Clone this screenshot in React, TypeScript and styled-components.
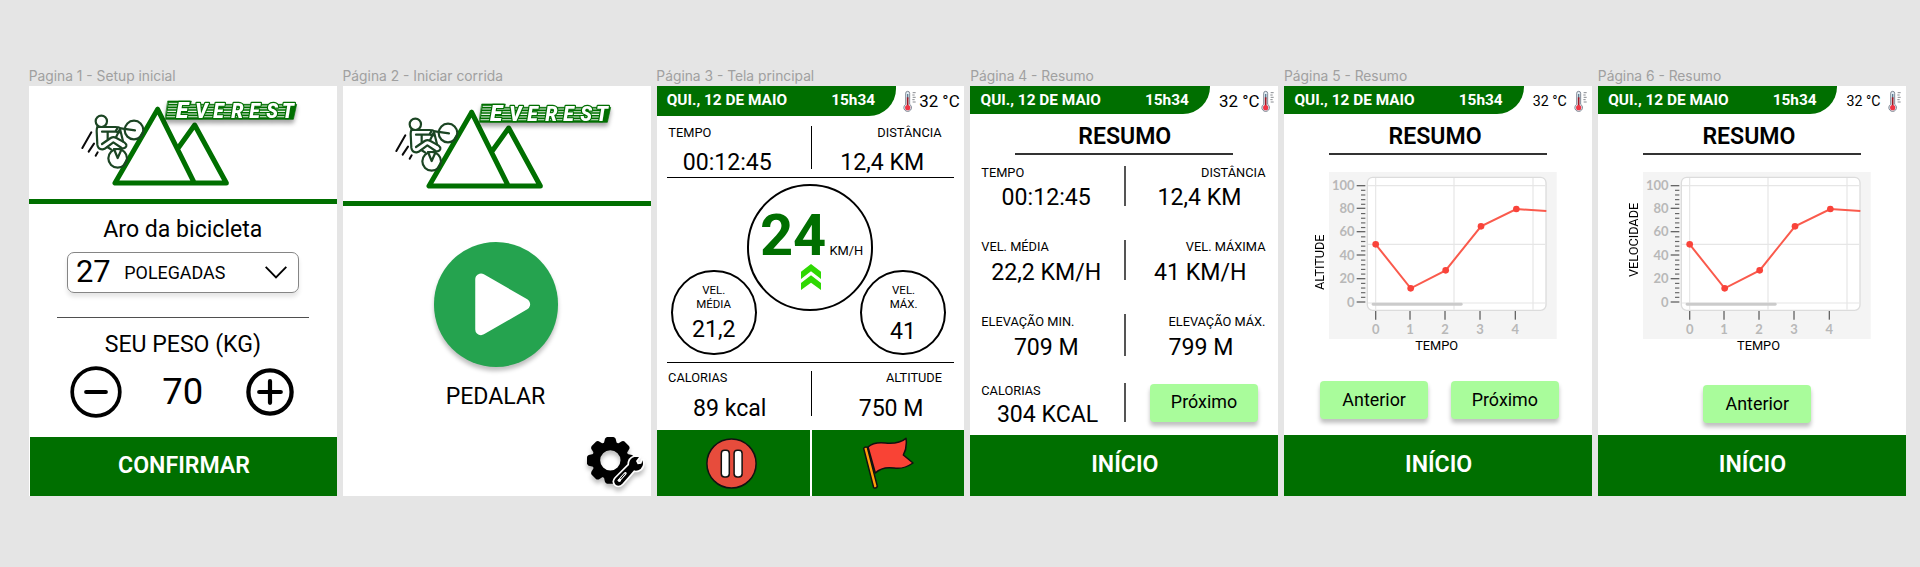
import React from "react";
import styled, { createGlobalStyle } from "styled-components";

const GREEN = "#006f00";

const GlobalStyle = createGlobalStyle`
  * { box-sizing: border-box; }
  body {
    margin: 0;
    background: #e5e5e5;
    color: #000;
    font-family: Roboto, "Liberation Sans", sans-serif;
  }
  svg { display: block; flex: none; }
`;

const Board = styled.main`
  display: flex;
  gap: 6.15px;
  height: 567px;
  padding: 66.3px 0 0 29px;
  overflow: hidden;
`;

const Page = styled.section`
  flex: none;
  width: 307.7px;
`;

const PageLabel = styled.h2`
  margin: 0 0 0 -0.3px;
  height: 20px;
  font: 400 13.8px/21.4px Inter, sans-serif;
  color: #a0a0a0;
  white-space: nowrap;
`;

const Frame = styled.div`
  display: flex;
  flex-direction: column;
  height: 410px;
  background: #fff;
  overflow: hidden;
`;

const Text = styled.div<{ $size?: number; $weight?: number; $line?: number; $top?: number; $shift?: number }>`
  flex: none;
  margin-top: ${(p) => p.$top ?? 0}px;
  padding-left: ${(p) => Math.max(p.$shift ?? 0, 0)}px;
  padding-right: ${(p) => Math.max(-(p.$shift ?? 0), 0)}px;
  font-size: ${(p) => p.$size ?? 23.08}px;
  font-weight: ${(p) => p.$weight ?? 400};
  line-height: ${(p) => p.$line ?? 28}px;
  text-align: center;
  white-space: nowrap;
`;

const LogoBar = styled.header<{ $height: number; $top: number }>`
  flex: none;
  height: ${(p) => p.$height}px;
  padding-top: ${(p) => p.$top}px;
  border-bottom: 5.5px solid ${GREEN};
  overflow: hidden;
`;

const Select = styled.div`
  flex: none;
  display: flex;
  align-items: center;
  width: 232px;
  height: 41px;
  margin: 8.3px 0 0 38px;
  padding: 0 11.5px 0 7.9px;
  border: 1px solid #858585;
  border-radius: 7px;
  box-shadow: 0 4px 4px rgba(0, 0, 0, 0.1);
`;

const SelectValue = styled.span`
  width: 48.4px;
  font-size: 30.9px;
  line-height: 38px;
`;

const SelectUnit = styled.span`
  flex: 1;
  font-size: 17.9px;
`;

const Rule = styled.hr<{ $top: number; $left: number; $width: number; $weight?: number; $color?: string }>`
  flex: none;
  width: ${(p) => p.$width}px;
  height: ${(p) => p.$weight ?? 1.3}px;
  margin: ${(p) => p.$top}px 0 0 ${(p) => p.$left}px;
  border: 0;
  background: ${(p) => p.$color ?? "#000"};
`;

const Stepper = styled.div`
  flex: none;
  display: flex;
  align-items: center;
  justify-content: space-between;
  height: 54px;
  margin-top: 5.9px;
  padding: 0 42.4px 0 40.8px;
  font-size: 36.4px;
`;

const StepperValue = styled.span`
  margin-left: -2.6px;
`;

const FooterButton = styled.button<{ $height: number; $left?: number }>`
  flex: none;
  width: auto;
  height: ${(p) => p.$height}px;
  margin: auto 0 0 ${(p) => p.$left ?? 0}px;
  padding: 0 0 1.4px 1px;
  border: 0;
  background: ${GREEN};
  color: #fff;
  font: 600 23.1px/28px Roboto, sans-serif;
`;

const PlayButton = styled.button`
  flex: none;
  width: 124.6px;
  height: 124.6px;
  margin: 36.4px 0 0 91px;
  padding: 0;
  border: 0;
  border-radius: 50%;
  background: #25a34f;
  box-shadow: 0 4px 4px rgba(0, 0, 0, 0.25);
`;

const SettingsSlot = styled.div`
  display: flex;
  justify-content: flex-end;
  margin: auto 5.4px 7.3px 0;
`;

const StatusRow = styled.header<{ $height: number }>`
  flex: none;
  display: flex;
  height: ${(p) => p.$height}px;
`;

const StatusDate = styled.div`
  display: flex;
  width: 239.3px;
  padding-left: 10.1px;
  border-bottom-right-radius: 27px;
  background: ${GREEN};
  color: #fff;
  font-weight: 700;
  font-size: 15.38px;
  line-height: 29.8px;
  white-space: nowrap;
`;

const StatusDay = styled.span`
  width: 164.4px;
`;

const StatusWeather = styled.div<{ $pad: number; $size: number; $gap: number; $reverse?: boolean }>`
  display: flex;
  flex-direction: ${(p) => (p.$reverse ? "row-reverse" : "row")};
  justify-content: ${(p) => (p.$reverse ? "flex-end" : "flex-start")};
  gap: ${(p) => p.$gap}px;
  padding-left: ${(p) => p.$pad}px;
  font-size: ${(p) => p.$size}px;
  line-height: 30.2px;
  white-space: nowrap;
`;

const Row = styled.div<{ $height: number; $top?: number; $thin?: boolean }>`
  flex: none;
  display: grid;
  grid-template-columns: ${(p) => (p.$thin ? "154.1px 1px" : "153.5px 1.6px")} 1fr;
  height: ${(p) => p.$height}px;
  margin-top: ${(p) => p.$top ?? 0}px;
`;

const Column = styled.div`
  display: flex;
  flex-direction: column;
`;

const StatLabel = styled.div<{ $left?: number; $right?: number }>`
  margin: 0 ${(p) => p.$right ?? 0}px 0 ${(p) => p.$left ?? 0}px;
  text-align: ${(p) => (p.$right ? "right" : "left")};
  font-size: 12.8px;
  line-height: 16.8px;
  white-space: nowrap;
`;

const StatValue = styled.div<{ $left: number; $gap: number }>`
  margin: ${(p) => p.$gap}px 0 0 ${(p) => p.$left + 0.4}px;
  font-size: 23.12px;
  line-height: 24px;
  white-space: nowrap;
`;

const Separator = styled.div<{ $top: number; $height: number; $color?: string }>`
  height: ${(p) => p.$height}px;
  margin-top: ${(p) => p.$top}px;
  background: ${(p) => p.$color ?? "#555"};
`;

const Gauges = styled.div`
  flex: none;
  display: flex;
  align-items: flex-start;
  height: 178.2px;
  padding: 6.2px 0 0 14.2px;
`;

const Dial = styled.div<{ $size: number; $top?: number; $left?: number }>`
  flex: none;
  display: flex;
  flex-direction: column;
  width: ${(p) => p.$size}px;
  height: ${(p) => p.$size}px;
  margin: ${(p) => p.$top ?? 0}px 0 0 ${(p) => p.$left ?? 0}px;
  border: 2px solid #000;
  border-radius: 50%;
`;

const Speed = styled.div`
  display: flex;
  align-items: baseline;
  height: 66px;
  margin-top: 15.4px;
  padding-left: 11.4px;
  color: ${GREEN};
  font-size: 57.8px;
  font-weight: 700;
  line-height: 66px;
`;

const SpeedUnit = styled.span`
  margin-left: 3.2px;
  color: #000;
  font-size: 12.9px;
  font-weight: 400;
  line-height: 16px;
`;

const SpeedArrows = styled.div`
  margin: -3.7px 0 0 52.7px;
`;

const Actions = styled.div`
  display: grid;
  grid-template-columns: 153.7px 1fr;
  gap: 1.2px;
  height: 66.8px;
  margin-top: auto;
`;

const ActionButton = styled.button<{ $left: number; $top: number }>`
  padding: ${(p) => p.$top}px 0 0 ${(p) => p.$left}px;
  display: flex;
  align-items: flex-start;
  border: 0;
  background: ${GREEN};
`;

const NavButton = styled.button`
  flex: none;
  width: 107.7px;
  height: 38.3px;
  padding: 0 0 1px;
  border: 0;
  border-radius: 4px;
  background: #a9fc9b;
  box-shadow: 0 4px 4px rgba(0, 0, 0, 0.25);
  color: #000;
  font: 400 17.9px/24px Roboto, sans-serif;
`;

const NavRow = styled.div<{ $top: number; $left: number }>`
  flex: none;
  display: flex;
  gap: 23px;
  margin: ${(p) => p.$top}px 0 0 ${(p) => p.$left}px;
`;

const ChartArea = styled.div`
  flex: none;
  display: flex;
  height: 167px;
  margin-top: 16.6px;
  padding-left: 27.5px;
`;

const AxisName = styled.div<{ $bottom: number }>`
  width: 17.5px;
  padding: ${(p) => Math.max(p.$bottom, 0)}px 0 ${(p) => Math.max(-p.$bottom, 0)}px 1.5px;
  writing-mode: vertical-rl;
  transform: rotate(180deg);
  font-size: 12.7px;
  line-height: 16px;
  white-space: nowrap;
  text-align: center;
`;

const hatch = [131, 139, 147, 155, 163, 171];
const letters = [
  { c: "E", x: 468, s: 68 },
  { c: "V", x: 526, s: 58 },
  { c: "E", x: 580, s: 58 },
  { c: "R", x: 634, s: 58 },
  { c: "E", x: 688, s: 58 },
  { c: "S", x: 739, s: 58 },
  { c: "T", x: 786, s: 58 },
];

function Logo() {
  return (
    <svg width="307.7" height="112.7" viewBox="27 79 923 338" fill="none" strokeLinecap="round" strokeLinejoin="round">
      <path d="M413 149L285 370H619L524 196L473 267M413 149L522 368" stroke={GREEN} strokeWidth="15" />
      <g stroke="#1b4523" strokeWidth="6.6">
        <circle cx="342" cy="211" r="28" />
        <circle cx="293" cy="296" r="28" />
        <circle cx="244" cy="185" r="17" />
        <path d="M232 202H285Q296 202 303 206L345 212" />
        <path d="M232 203Q230 206 230 214L232 255Q234 270 248 269Q254 268 260 263L280 248L305 265Q316 268 319 259Q320 253 313 248L288 234Q280 230 272 235L246 253" />
        <path d="M246 216H286L292 206M263 217V238M300 208L288 233M300 208L309 245M287 216L300 218" />
        <path d="M293 295L282 268H305ZM274 270L262 262" />
      </g>
      <path d="M214 218L187 265M222 252L206 276M233 278L227 288" stroke="#0a0a0a" strokeWidth="6" />
      <g style={{ filter: "drop-shadow(0px 11px 6px rgba(0,0,0,.35))" }}>
        <path d="M444 124H514L512 134H830L820 179H436Z" fill={GREEN} stroke={GREEN} strokeWidth="2" />
        {hatch.map((y) => (
          <path key={y} d={`M${446 - (y - 131) * 0.16} ${y}H${y < 134 ? 480 : 806}`} stroke="#e4f1e4" strokeWidth="3.2" strokeLinecap="butt" />
        ))}
        <g fontFamily="Roboto, sans-serif" fontWeight="900" fontStyle="italic" fill="#fff" stroke={GREEN} strokeWidth="7" paintOrder="stroke">
          {letters.map((l) => (
            <text key={l.x} x={l.x} y="176" fontSize={l.s}>
              {l.c}
            </text>
          ))}
        </g>
      </g>
    </svg>
  );
}

function Minus() {
  return (
    <svg width="52" height="52" viewBox="-26 -26 52 52" fill="none" stroke="#000" strokeLinecap="round">
      <circle r="23.8" strokeWidth="3.7" />
      <path d="M-9.9 0H9.9" strokeWidth="4" />
    </svg>
  );
}

function Plus() {
  return (
    <svg width="48" height="48" viewBox="-24 -24 48 48" fill="none" stroke="#000" strokeLinecap="round">
      <circle r="21.6" strokeWidth="4.3" />
      <path d="M-10.8 0H10.8M0 -10.8V10.8" strokeWidth="4.2" />
    </svg>
  );
}

function Thermometer() {
  return (
    <svg width="13" height="29" viewBox="0 0 39 87" fill="none">
      <path d="M8 22a6 6 0 0 1 12 0v33a11.5 11.5 0 1 1-12 0z" fill="#e3edf4" stroke="#5a6472" strokeWidth="2.2" />
      <path d="M14 24v14" stroke="#5c7c92" strokeWidth="4" />
      <path d="M14 34v26" stroke="#a01824" strokeWidth="5" />
      <circle cx="14" cy="65" r="7.8" fill="#f03545" />
      <path d="M29 20h9M28 27h7M29 34h9M28 41h7M29 48h9" stroke="#4b5058" strokeWidth="2" />
    </svg>
  );
}

function SettingsIcon() {
  return (
    <svg width="58" height="54" viewBox="0 0 174 162" style={{ filter: "drop-shadow(0px 4px 2px rgba(0,0,0,.25))" }}>
      <g transform="translate(70 76)">
        {[0, 45, 90, 135, 180, 225, 270, 315].map((a) => (
          <path key={a} transform={`rotate(${a})`} d="M-20 -48L-16 -65Q-13 -70 -9 -70H9Q13 -70 16 -65L20 -48Z" />
        ))}
        <circle r="43" fill="none" stroke="#000" strokeWidth="25" />
      </g>
      <path d="M86 130L126 90Q126 70 142 66L156 66L147 78L152 88L163 86L167 76Q172 98 154 106Q146 108 141 106L106 146Q96 156 86 149Q77 140 86 130Z" stroke="#fff" strokeWidth="10" strokeLinejoin="round" />
      <path d="M86 130L126 90Q126 70 142 66L156 66L147 78L152 88L163 86L167 76Q172 98 154 106Q146 108 141 106L106 146Q96 156 86 149Q77 140 86 130Z" />
      <path d="M99 133L115 115" stroke="#fff" strokeWidth="8" strokeLinecap="round" />
      <path d="M101 131L113 117" stroke="#000" strokeWidth="3" strokeLinecap="round" />
      <circle cx="97" cy="136" r="5" fill="#fff" />
    </svg>
  );
}

function Flag() {
  return (
    <svg width="52" height="52" viewBox="0 0 156 156" stroke="#101010" strokeWidth="4.5" strokeLinejoin="round">
      <path d="M18 30Q36 14 70 18Q110 22 132 4Q136 32 124 54L153 78Q124 98 96 93Q60 88 40 108Z" fill="#f94335" />
      <path d="M5 34Q9 28 16 31L46 148Q42 156 35 152Z" fill="#ff9d0a" />
    </svg>
  );
}

const yLabels = [
  [100, 41],
  [80, 109],
  [60, 179],
  [40, 249],
  [20, 320],
  [0, 390],
];
const xTicks = [140, 243, 348, 453, 559];
const points = [
  [140, 217],
  [245, 349],
  [350, 295],
  [456, 163],
  [562, 111],
];

function Chart() {
  return (
    <svg width="227.7" height="167" viewBox="0 0 683 501">
      <rect width="683" height="501" fill="#f4f4f4" />
      <rect x="115" y="16" width="536" height="399" rx="16" fill="#fff" stroke="#dcdcdc" strokeWidth="4" />
      <path d="M140 18V413M375 18V413M612 18V413M117 41H649M117 217H649M117 393H649" stroke="#e6e6e6" strokeWidth="3.5" fill="none" />
      <rect x="128" y="392" width="273" height="9" rx="4" fill="#cbcbcb" />
      {yLabels.map(([v, y]) => (
        <path key={v} d={`M83 ${y}H109`} stroke="#666" strokeWidth="4" />
      ))}
      {Array.from({ length: 25 }, (_, i) => i)
        .filter((i) => i % 5 !== 0)
        .map((i) => (
          <path key={i} d={`M96 ${41 + i * 13.96}H109`} stroke="#666" strokeWidth="3.5" />
        ))}
      {xTicks.map((x) => (
        <path key={x} d={`M${x} 417V443`} stroke="#666" strokeWidth="4" />
      ))}
      <g fontFamily="Lato, sans-serif" fontWeight="700" fontSize="39" fill="#b8b8b8">
        {yLabels.map(([v, y]) => (
          <text key={v} x="77" y={y + 14} textAnchor="end">
            {v}
          </text>
        ))}
        {xTicks.map((x, i) => (
          <text key={x} x={x} y="485" textAnchor="middle">
            {i}
          </text>
        ))}
      </g>
      <path d="M140 217L245 349L350 295L456 163L562 111L652 117" fill="none" stroke="#fa5a4c" strokeWidth="6" />
      {points.map(([x, y]) => (
        <circle key={x} cx={x} cy={y} r="10" fill="#f9433a" />
      ))}
    </svg>
  );
}

type StatusProps = { height?: number; size: number; pad: number; gap: number; iconLast?: boolean };

function Status({ height = 28, size, pad, gap, iconLast }: StatusProps) {
  return (
    <StatusRow $height={height}>
      <StatusDate>
        <StatusDay>QUI., 12 DE MAIO</StatusDay>
        <span>15h34</span>
      </StatusDate>
      <StatusWeather $pad={pad} $size={size} $gap={gap} $reverse={iconLast}>
        <Thermometer />
        <span>32 °C</span>
      </StatusWeather>
    </StatusRow>
  );
}

type Side = { label: string; value: string; left: number };
type StatsProps = {
  height: number;
  top?: number;
  gap: number;
  lineTop: number;
  lineHeight: number;
  thin?: boolean;
  labelLeft?: number;
  labelRight?: number;
  first: Side;
  second?: Side;
  children?: React.ReactNode;
};

function Stats({ height, top, gap, lineTop, lineHeight, thin, labelLeft = 10.8, labelRight = 12.7, first, second, children }: StatsProps) {
  return (
    <Row $height={height} $top={top} $thin={thin}>
      <Column>
        <StatLabel $left={labelLeft}>{first.label}</StatLabel>
        <StatValue $left={first.left} $gap={gap}>
          {first.value}
        </StatValue>
      </Column>
      <Separator $top={lineTop} $height={lineHeight} $color={thin ? "#000" : undefined} />
      <Column>
        {second && <StatLabel $right={labelRight}>{second.label}</StatLabel>}
        {second && (
          <StatValue $left={second.left - 155.1} $gap={gap}>
            {second.value}
          </StatValue>
        )}
        {children}
      </Column>
    </Row>
  );
}

function ChartPage({ title, axis, axisOffset, tempoShift, buttons, navTop, navLeft }: {
  title: string;
  axis: string;
  axisOffset: number;
  tempoShift: number;
  buttons: string[];
  navTop: number;
  navLeft: number;
}) {
  return (
    <Page>
      <PageLabel>{title}</PageLabel>
      <Frame>
        <Status size={14.2} pad={9.1} gap={7.4} iconLast />
        <Text $weight={600} $top={8.8} $shift={-6.2}>RESUMO</Text>
        <Rule $top={2.2} $left={45} $width={217.7} $weight={2} $color="#333" />
        <ChartArea>
          <AxisName $bottom={axisOffset}>{axis}</AxisName>
          <Chart />
        </ChartArea>
        <Text $size={12.8} $line={14} $shift={tempoShift}>TEMPO</Text>
        <NavRow $top={navTop} $left={navLeft}>
          {buttons.map((b) => (
            <NavButton key={b}>{b}</NavButton>
          ))}
        </NavRow>
        <FooterButton $height={61.6}>INÍCIO</FooterButton>
      </Frame>
    </Page>
  );
}

export default function App() {
  return (
    <>
      <GlobalStyle />
      <Board>
        <Page>
          <PageLabel>Pagina 1 - Setup inicial</PageLabel>
          <Frame>
            <LogoBar $height={118.2} $top={0}>
              <Logo />
            </LogoBar>
            <Text $top={11.2}>Aro da bicicleta</Text>
            <Select>
              <SelectValue>27</SelectValue>
              <SelectUnit>POLEGADAS</SelectUnit>
              <svg width="22" height="13" viewBox="0 0 22 13" fill="none" stroke="#000" strokeWidth="1.9">
                <path d="M0.7 0.9L11 11.4L21.3 0.9" />
              </svg>
            </Select>
            <Rule $top={23.6} $left={28.3} $width={251.4} $weight={1.7} $color="#4f4f4f" />
            <Text $top={12.8}>SEU PESO (KG)</Text>
            <Stepper>
              <Minus />
              <StepperValue>70</StepperValue>
              <Plus />
            </Stepper>
            <FooterButton $height={59} $left={1.4}>CONFIRMAR</FooterButton>
          </Frame>
        </Page>

        <Page>
          <PageLabel>Página 2 - Iniciar corrida</PageLabel>
          <Frame>
            <LogoBar $height={119.6} $top={2.4}>
              <Logo />
            </LogoBar>
            <PlayButton aria-label="Pedalar">
              <svg width="124.6" height="124.6" viewBox="0 0 124.6 124.6">
                <path d="M47 37.2V87.4L90.4 62.3Z" fill="#fff" stroke="#fff" strokeWidth="11.5" strokeLinejoin="round" />
              </svg>
            </PlayButton>
            <Text $top={16} $shift={-2.4}>PEDALAR</Text>
            <SettingsSlot>
              <SettingsIcon />
            </SettingsSlot>
          </Frame>
        </Page>

        <Page>
          <PageLabel>Página 3 - Tela principal</PageLabel>
          <Frame>
            <Status height={29.3} size={16.9} pad={7} gap={3.2} />
            <Stats
              height={51.2} top={9.9} gap={8.5} lineTop={0.8} lineHeight={43} thin
              labelLeft={11.7} labelRight={22.7}
              first={{ label: "TEMPO", value: "00:12:45", left: 25.6 }}
              second={{ label: "DISTÂNCIA", value: "12,4 KM", left: 183.2 }}
            />
            <Rule $top={0} $left={10} $width={287} />
            <Gauges>
              <Dial $size={85.7} $top={85.6}>
                <Text $size={11.5} $line={14} $top={11}>VEL.</Text>
                <Text $size={11.5} $line={14}>MÉDIA</Text>
                <Text $line={24} $top={6.9}>21,2</Text>
              </Dial>
              <Dial $size={126.5} $left={-10}>
                <Speed>
                  24<SpeedUnit>KM/H</SpeedUnit>
                </Speed>
                <SpeedArrows>
                  <svg width="20" height="26" viewBox="0 0 60 78" fill="#2fd803">
                    <path d="M30 0L60 23V45L30 22L0 45V23Z" />
                    <path d="M30 34L60 57V78L30 56L0 78V57Z" />
                  </svg>
                </SpeedArrows>
              </Dial>
              <Dial $size={85.7} $top={85.6} $left={-12.8}>
                <Text $size={11.5} $line={14} $top={11} $shift={1}>VEL.</Text>
                <Text $size={11.5} $line={14} $shift={1}>MÁX.</Text>
                <Text $line={24} $top={9.4}>41</Text>
              </Dial>
            </Gauges>
            <Rule $top={5.9} $left={10} $width={287} />
            <Stats
              height={52} top={7} gap={9.5} lineTop={1} lineHeight={44.3} thin
              labelLeft={11.4} labelRight={22.3}
              first={{ label: "CALORIAS", value: "89 kcal", left: 35.9 }}
              second={{ label: "ALTITUDE", value: "750 M", left: 201.6 }}
            />
            <Actions>
              <ActionButton $left={48.9} $top={8} aria-label="Pausar">
                <svg width="51" height="51" viewBox="-25.5 -25.5 51 51" stroke="#111" strokeWidth="1.5">
                  <circle r="24.6" fill="#e74c3c" />
                  <rect x="-10.2" y="-13.3" width="8" height="26.8" rx="3.2" fill="#fff" />
                  <rect x="2.6" y="-13.3" width="8" height="26.8" rx="3.2" fill="#fff" />
                </svg>
              </ActionButton>
              <ActionButton $left={50.3} $top={7.4} aria-label="Finalizar">
                <Flag />
              </ActionButton>
            </Actions>
          </Frame>
        </Page>

        <Page>
          <PageLabel>Página 4 - Resumo</PageLabel>
          <Frame>
            <Status size={16.9} pad={9.3} gap={1.4} iconLast />
            <Text $weight={600} $top={8.8} $shift={0.9}>RESUMO</Text>
            <Rule $top={2.2} $left={44.7} $width={217.7} $weight={2} $color="#333" />
            <Stats
              height={74.3} top={9.7} gap={4.6} lineTop={1} lineHeight={39.6}
              first={{ label: "TEMPO", value: "00:12:45", left: 30.7 }}
              second={{ label: "DISTÂNCIA", value: "12,4 KM", left: 186.7 }}
            />
            <Stats
              height={74.7} gap={4.7} lineTop={0.7} lineHeight={40}
              first={{ label: "VEL. MÉDIA", value: "22,2 KM/H", left: 20.4 }}
              second={{ label: "VEL. MÁXIMA", value: "41 KM/H", left: 183.2 }}
            />
            <Stats
              height={69} gap={5.6} lineTop={0.3} lineHeight={41.3}
              first={{ label: "ELEVAÇÃO MIN.", value: "709 M", left: 43 }}
              second={{ label: "ELEVAÇÃO MÁX.", value: "799 M", left: 197.6 }}
            />
            <Stats
              height={50} gap={3.3} lineTop={0.3} lineHeight={38.7}
              first={{ label: "CALORIAS", value: "304 KCAL", left: 26 }}
            >
              <NavRow $top={0.6} $left={24.6}>
                <NavButton>Próximo</NavButton>
              </NavRow>
            </Stats>
            <FooterButton $height={61.6}>INÍCIO</FooterButton>
          </Frame>
        </Page>

        <ChartPage
          title="Página 5 - Resumo" axis="ALTITUDE" axisOffset={-13}
          tempoShift={-3} buttons={["Anterior", "Próximo"]} navTop={28} navLeft={36}
        />
        <ChartPage
          title="Página 6 - Resumo" axis="VELOCIDADE" axisOffset={31}
          tempoShift={13} buttons={["Anterior"]} navTop={32} navLeft={105.3}
        />
      </Board>
    </>
  );
}
